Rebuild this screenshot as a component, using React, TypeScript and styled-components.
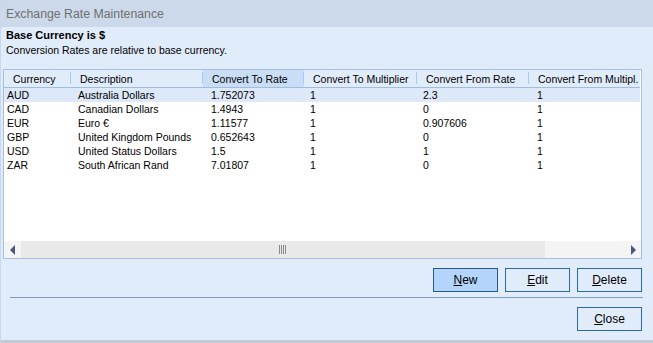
import React from 'react'
import styled, { createGlobalStyle, css } from 'styled-components'

const GlobalStyle = createGlobalStyle`
  html, body {
    margin: 0;
    padding: 0;
    background: #e1ecfb;
  }
  body {
    font-family: 'Liberation Sans', Arial, sans-serif;
    font-size: 10.5px;
    color: #000;
  }
`

const Window = styled.div`
  width: 653px;
  height: 343px;
  display: flex;
  flex-direction: column;
  background: #e1ecfb;
  box-sizing: border-box;
  border-left: 1px solid #c9d8ec;
  border-bottom: 3px solid #c3ccd6;
  overflow: hidden;
`

const TitleBar = styled.div`
  height: 27px;
  flex: none;
  display: flex;
  align-items: center;
  padding-left: 5px;
  background: #cbd9ea;
  color: #707070;
  font-size: 12.3px;
`

const Body = styled.div`
  flex: 1;
  display: flex;
  flex-direction: column;
  padding: 1px 11px 0 2px;
`

const Heading = styled.div`
  line-height: 15px;
  padding-left: 3px;
  font-weight: ${p => (p.$bold ? 'bold' : 'normal')};
  font-size: ${p => (p.$bold ? '11px' : '10.5px')};
`

const Grid = styled.div`
  margin-top: 11px;
  height: 190px;
  box-sizing: border-box;
  border: 1px solid #a7bfdf;
  background: #fff;
  display: flex;
  flex-direction: column;
`

const HeaderRow = styled.div`
  display: flex;
  height: 18px;
  flex: none;
  background: #e1ecfb;
  border-bottom: 1px solid #9dbde6;
  box-sizing: border-box;
  margin-right: 1px;
`

const HeaderCell = styled.div`
  width: ${p => p.$w}px;
  flex: none;
  box-sizing: border-box;
  padding-left: 9px;
  display: flex;
  align-items: center;
  position: relative;
  white-space: nowrap;
  overflow: hidden;
  ${p =>
    p.$active &&
    css`
      background: #c9ddf5;
    `}
  &::after {
    content: '';
    position: absolute;
    right: 0;
    top: 2px;
    bottom: 3px;
    width: 1px;
    background: ${p => (p.$last ? 'transparent' : '#a9c9ef')};
  }
`

const Row = styled.div`
  display: flex;
  height: 14px;
  line-height: 14px;
  margin-right: 1px;
  background: ${p => (p.$selected ? '#dde8f9' : '#fff')};
`

const Cell = styled.div`
  width: ${p => p.$w}px;
  flex: none;
  box-sizing: border-box;
  padding-left: ${p => p.$pad}px;
  white-space: nowrap;
  overflow: hidden;
`

const Filler = styled.div`
  flex: 1;
`

const HScroll = styled.div`
  height: 17px;
  flex: none;
  display: flex;
  background: #f4f4f4;
`

const ArrowBtn = styled.div`
  width: 17px;
  flex: none;
  display: flex;
  align-items: center;
  justify-content: center;
  background: #f4f4f4;
`

const Thumb = styled.div`
  width: 524px;
  flex: none;
  background: #e9e9e9;
  display: flex;
  align-items: center;
  justify-content: center;
`

const Track = styled.div`
  flex: 1;
`

const ButtonRow = styled.div`
  display: flex;
  justify-content: flex-end;
  gap: 7px;
  margin-top: 9px;
`

const Button = styled.button`
  width: 65px;
  height: 24px;
  box-sizing: border-box;
  border: 1px solid ${p => (p.$primary ? '#2b5585' : '#2d6a9f')};
  background: ${p => (p.$primary ? '#b3d4fb' : '#e1ecfb')};
  font-family: 'Liberation Sans', Arial, sans-serif;
  font-size: 12px;
  color: #000;
  padding: 0;
  cursor: default;
  u {
    text-decoration: underline;
  }
`

const Separator = styled.div`
  height: 1px;
  background: #7b9dc1;
  margin: 5px -1px 0 7px;
`

const CloseRow = styled(ButtonRow)`
  margin-top: 9px;
`

const Arrow = ({ dir }: { dir: 'left' | 'right' }) => (
  <svg width="6" height="10" viewBox="0 0 6 10">
    {dir === 'left' ? (
      <path d="M5 0 L5 10 L0 5 Z" fill="#4a5680" />
    ) : (
      <path d="M1 0 L1 10 L6 5 Z" fill="#4a5680" />
    )}
  </svg>
)

const Grip = () => (
  <svg width="8" height="9" viewBox="0 0 8 9">
    {[0, 2, 4, 6].map(x => (
      <rect key={x} x={x} y={0} width={1} height={9} fill="#8a8a8a" />
    ))}
  </svg>
)

const columns = [
  { title: 'Currency', w: 67, pad: 3 },
  { title: 'Description', w: 132, pad: 7 },
  { title: 'Convert To Rate', w: 101, pad: 8, active: true },
  { title: 'Convert To Multiplier', w: 113, pad: 6 },
  { title: 'Convert From Rate', w: 112, pad: 6 },
  { title: 'Convert From Multipl.', w: 111, pad: 8 },
]

const rows = [
  ['AUD', 'Australia Dollars', '1.752073', '1', '2.3', '1'],
  ['CAD', 'Canadian Dollars', '1.4943', '1', '0', '1'],
  ['EUR', 'Euro €', '1.11577', '1', '0.907606', '1'],
  ['GBP', 'United Kingdom Pounds', '0.652643', '1', '0', '1'],
  ['USD', 'United Status Dollars', '1.5', '1', '1', '1'],
  ['ZAR', 'South African Rand', '7.01807', '1', '0', '1'],
]

const App = () => {
  return (
    <Window>
      <GlobalStyle />
      <TitleBar>Exchange Rate Maintenance</TitleBar>
      <Body>
        <Heading $bold>Base Currency is $</Heading>
        <Heading>Conversion Rates are relative to base currency.</Heading>
        <Grid>
          <HeaderRow>
            {columns.map((c, i) => (
              <HeaderCell key={c.title} $w={c.w} $active={c.active} $last={i === columns.length - 1}>
                {c.title}
              </HeaderCell>
            ))}
          </HeaderRow>
          {rows.map((r, ri) => (
            <Row key={r[0]} $selected={ri === 0}>
              {r.map((v, ci) => (
                <Cell key={ci} $w={columns[ci].w} $pad={columns[ci].pad}>
                  {v}
                </Cell>
              ))}
            </Row>
          ))}
          <Filler />
          <HScroll>
            <ArrowBtn>
              <Arrow dir="left" />
            </ArrowBtn>
            <Thumb>
              <Grip />
            </Thumb>
            <Track />
            <ArrowBtn>
              <Arrow dir="right" />
            </ArrowBtn>
          </HScroll>
        </Grid>
        <ButtonRow>
          <Button $primary>
            <u>N</u>ew
          </Button>
          <Button>
            <u>E</u>dit
          </Button>
          <Button>
            <u>D</u>elete
          </Button>
        </ButtonRow>
        <Separator />
        <CloseRow>
          <Button>
            <u>C</u>lose
          </Button>
        </CloseRow>
      </Body>
    </Window>
  )
}

export default App
